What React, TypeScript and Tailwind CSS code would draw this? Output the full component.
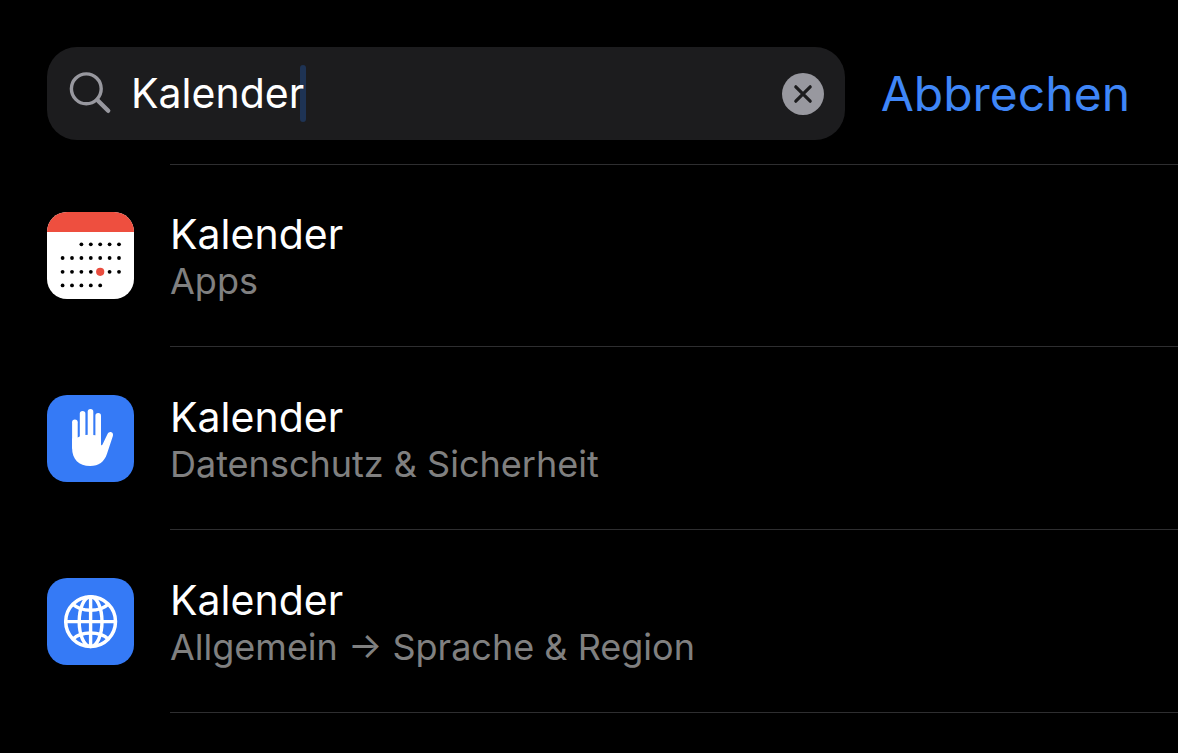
import { useState } from "react";
import type { ReactNode } from "react";

function CalendarIcon() {
  const rows = [
    { y: 32.3, from: 2, to: 6 },
    { y: 46, from: 0, to: 6 },
    { y: 59.8, from: 0, to: 6 },
    { y: 73.4, from: 0, to: 4 },
  ];
  return (
    <svg viewBox="0 0 87 87" className="size-full bg-white" aria-hidden="true">
      <rect width="87" height="20" fill="#ee4f3f" />
      {rows.map((row, r) =>
        Array.from({ length: row.to - row.from + 1 }, (_, i) => {
          const col = row.from + i;
          const today = r === 2 && col === 4;
          return (
            <circle
              key={`${r}-${col}`}
              cx={15.6 + col * 9.4}
              cy={row.y}
              r={today ? 4.1 : 1.9}
              fill={today ? "#ea4d3f" : "#000"}
            />
          );
        }),
      )}
    </svg>
  );
}

function HandIcon() {
  return (
    <svg viewBox="0 0 87 87" className="size-full bg-[#357af6]" aria-hidden="true">
      <g stroke="#fff" strokeWidth="5.6" strokeLinecap="round">
        <path d="M27.9 27.3V52" />
        <path d="M35.6 18.8V52" />
        <path d="M43.5 16.8V52" />
        <path d="M51.2 20.7V52" />
      </g>
      <path
        d="M25.1 43.4L30.7 42.6C33 40.9 37 39.8 42 39.8C47 39.8 51 40.6 54 42V49.4C54 50.4 55 50.6 55.5 49.6L60.4 39.2C61.3 37.3 63 36.6 64.4 37.2C65.9 37.8 66.4 39.4 65.8 41.2L60 58.8C57.3 67 51.8 71 43.2 71C31.6 71 25.1 64.2 25.1 53Z"
        fill="#fff"
      />
    </svg>
  );
}

function GlobeIcon() {
  return (
    <svg viewBox="0 0 87 87" className="size-full bg-[#357af6]" aria-hidden="true">
      <g fill="none" stroke="#fff" strokeWidth="3.4">
        <circle cx="43.6" cy="43.6" r="24.9" strokeWidth="3.5" />
        <ellipse cx="43.6" cy="43.6" rx="11.4" ry="24.9" />
        <path d="M43.6 18.7V68.5M18.7 43.6H68.5" />
        <path d="M26 26.2C30 30 36.4 32.2 43.6 32.2S57.2 30 61.2 26.2" />
        <path d="M26 61C30 57.2 36.4 55 43.6 55S57.2 57.2 61.2 61" />
      </g>
    </svg>
  );
}

type Result = { id: string; title: string; path: string; icon: ReactNode };

const results: Result[] = [
  { id: "apps", title: "Kalender", path: "Apps", icon: <CalendarIcon /> },
  { id: "privacy", title: "Kalender", path: "Datenschutz & Sicherheit", icon: <HandIcon /> },
  { id: "region", title: "Kalender", path: "Allgemein → Sprache & Region", icon: <GlobeIcon /> },
];

export default function App() {
  const [query, setQuery] = useState("Kalender");

  return (
    <main className="min-h-screen bg-black font-['Inter','Liberation_Sans',sans-serif] text-white">
      <header className="flex items-center gap-9 pt-[47px] pr-12 pb-6 pl-[47px]">
        <label className="flex h-[93px] min-w-0 flex-1 items-center rounded-[30px] bg-[#1c1c1e] pr-[21px] pl-[22px]">
          <svg viewBox="0 0 42 42" className="mr-5 size-[42px] shrink-0 overflow-visible" aria-hidden="true">
            <g fill="none" stroke="#98989f" strokeLinecap="round">
              <circle cx="17.3" cy="15.8" r="14.9" strokeWidth="3.4" />
              <path d="M28.3 27L39.2 37.8" strokeWidth="4.4" />
            </g>
          </svg>
          <input
            type="text"
            aria-label="Suchen"
            value={query}
            onChange={(e) => setQuery(e.target.value)}
            className="z-10 field-sizing-content max-w-full min-w-0 bg-transparent pb-0.5 text-[41px] leading-[50px] text-white caret-transparent outline-none"
          />
          <span className="-ml-1 h-[57px] w-[6px] shrink-0 rounded-sm bg-[#1e3354]" />
          <button
            type="button"
            aria-label="Text löschen"
            onClick={() => setQuery("")}
            className="ml-auto size-[42px] shrink-0 rounded-full bg-[#98989f]"
          >
            <svg viewBox="0 0 42 42" className="size-full" aria-hidden="true">
              <path
                d="M13.8 13.8L28.2 28.2M28.2 13.8L13.8 28.2"
                stroke="#1c1c1e"
                strokeWidth="3.2"
                strokeLinecap="round"
              />
            </svg>
          </button>
        </label>
        <button type="button" className="text-[48px] leading-[60px] text-[#3f86f7]">
          Abbrechen
        </button>
      </header>

      <ul>
        {results.map((result) => (
          <li key={result.id} className="group">
            <a href={`#${result.id}`} className="flex items-center gap-9 pl-[47px]">
              <span className="size-[87px] shrink-0 overflow-hidden rounded-[20px]">{result.icon}</span>
              <span className="flex min-h-[183px] flex-1 flex-col border-b border-[#2e2e30] pt-[45px] group-first:border-t group-first:pt-11">
                <span className="text-[41px] leading-[50px]">{result.title}</span>
                <span className="text-[36px] leading-[44px] text-[#808080]">{result.path}</span>
              </span>
            </a>
          </li>
        ))}
      </ul>
    </main>
  );
}
